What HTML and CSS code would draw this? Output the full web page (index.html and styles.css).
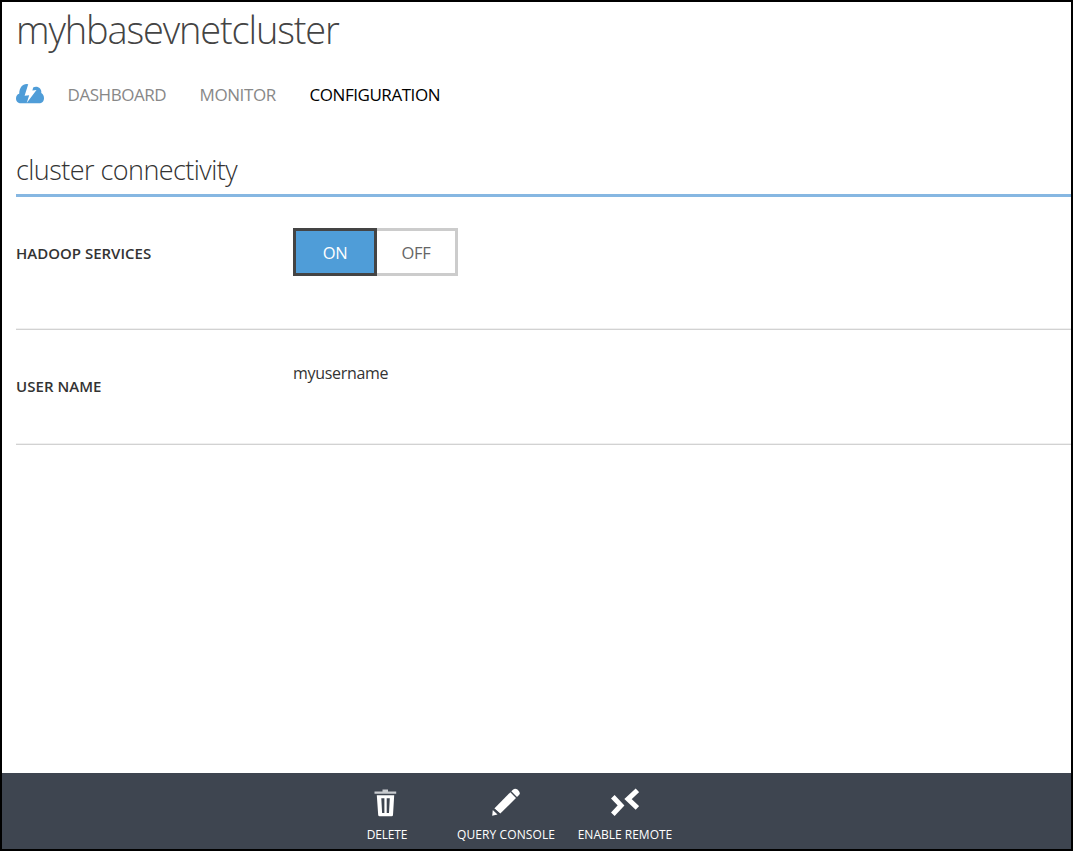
FILE: index.html
```html
<!DOCTYPE html>
<html lang="en">
<head>
<meta charset="utf-8">
<title>myhbasevnetcluster</title>
<link rel="stylesheet" href="styles.css">
</head>
<body>
<div class="portal">
  <main class="content">
    <h1 class="title">myhbasevnetcluster</h1>
    <nav class="tabs">
      <svg class="cloud" viewBox="0 0 28 20" aria-hidden="true">
        <path fill="#4f9dd8" d="M5 19.300C2 19.300 0 17.200 0 14.500C0 12 1.200 10.200 3.200 9.700C3.400 3.500 6.500 0 10.500 0L14 .4L17 3.500C21.500 1.500 26 4.500 25.300 9C27.200 10 28 12 28 14.200C28 17.300 26 19.300 23 19.300Z"/>
        <path fill="#fff" d="M12.300 0H18L16.400 6.500L20.500 6L10.700 19L13.200 11.300L8.600 11.800Z"/>
      </svg>
      <a class="tab tab-dashboard">DASHBOARD</a>
      <a class="tab tab-monitor">MONITOR</a>
      <a class="tab tab-active">CONFIGURATION</a>
    </nav>
    <h2 class="section-title">cluster connectivity</h2>
    <section class="row services">
      <span class="label label-services">HADOOP SERVICES</span>
      <div class="toggle">
        <button class="on">ON</button>
        <button class="off">OFF</button>
      </div>
    </section>
    <section class="row user">
      <span class="label label-user">USER NAME</span>
      <span class="value">myusername</span>
    </section>
  </main>
  <footer class="commands">
    <div class="command delete">
      <svg viewBox="0 0 28 30" aria-hidden="true">
        <path fill="#c9ccd0" d="M9.500 1.500h5.500v2h8.200v2.300H1.500V3.500h8z"/>
        <path fill="#fff" fill-rule="evenodd" d="M3.800 7.200H21.200L20 27Q19.900 28.300 18.600 28.300H6.600Q5.300 28.300 5.200 27ZM8.300 10.300L9.100 25H11.400V10.300ZM13.700 10.300V25H16L16.800 10.300Z"/>
      </svg>
      <span>DELETE</span>
    </div>
    <div class="command query">
      <svg viewBox="0 0 28 30" aria-hidden="true">
        <path fill="#fff" d="M2.300 20.500L18.300 4.300L24 10L8.300 25.500Z"/>
        <path fill="#fff" d="M19.300 3.300L21.200 1.400Q23.200-.2 25.500 1.600L27 3.200Q28.500 5.200 27 7L25 9Z"/>
        <path fill="#fff" d="M.8 22L5.500 26.500L.2 27.800Z"/>
        <path stroke="#3e4550" stroke-width="1" d="M2 20.500L8 26.500"/>
      </svg>
      <span>QUERY CONSOLE</span>
    </div>
    <div class="command remote">
      <svg viewBox="0 0 28 30" aria-hidden="true">
        <path fill="none" stroke="#fff" stroke-width="5" d="M1.800 8.700L10 17.400L1.800 26.200M26.400 2.200L17 11.100L26.400 20"/>
      </svg>
      <span>ENABLE REMOTE</span>
    </div>
  </footer>
</div>
</body>
</html>
```
FILE: styles.css
```css
* { box-sizing: border-box; }
body { margin: 0; background: #fff; font-family: "Open Sans", "Noto Sans", sans-serif; color: #333; }
.portal { width: 1073px; height: 851px; border: 2px solid #000; display: flex; flex-direction: column; overflow: hidden; }
.content { flex: 1; padding-left: 14px; }
.title { margin: 0; height: 56px; line-height: 54px; font-size: 38px; font-weight: 300; letter-spacing: -1.15px; color: #444; }
.tabs { display: flex; align-items: center; height: 70px; padding-top: 2px; }
.cloud { width: 28px; height: 20px; margin-right: 23.5px; }
.tab { font-size: 17px; font-weight: 400; line-height: 24px; padding-top: 2px; color: #888; white-space: nowrap; }
.tab-dashboard { width: 132px; letter-spacing: -0.45px; }
.tab-monitor { width: 110px; letter-spacing: -0.4px; }
.tab-active { color: #000; letter-spacing: -0.45px; }
.section-title { margin: 0; height: 69px; padding-top: 24px; line-height: 36px; font-size: 27px; font-weight: 300; letter-spacing: -0.55px; color: #333; border-bottom: 3px solid #86b7e2; }
.row { display: grid; grid-template-columns: 277px 1fr; align-items: start; border-bottom: 1px solid #d2d2d2; box-shadow: inset 0 -1px #f0f0f0; }
.services { height: 133px; padding-top: 31px; }
.user { height: 115px; padding-top: 31px; }
.label { font-size: 15px; font-weight: 600; line-height: 20px; white-space: nowrap; }
.label-services { margin-top: 15px; letter-spacing: 0; }
.label-user { margin-top: 15px; letter-spacing: 0.05px; }
.value { font-size: 16px; line-height: 24px; letter-spacing: -0.3px; }
.toggle { display: flex; height: 48px; }
.toggle button { padding: 0; margin: 0; background: #fff; font: 400 16.5px "Open Sans", sans-serif; border: 3px solid #ccc; color: #666; letter-spacing: -0.3px; }
.toggle .on { width: 84px; background: #4f9dd8; border-color: #444; color: #fff; }
.toggle .off { width: 81px; border-left: 0; }
.commands { height: 76px; background: #3e4550; display: flex; padding: 15px 0 0 335px; color: #fff; }
.command { display: flex; flex-direction: column; align-items: center; }
.command svg { width: 28px; height: 30px; }
.command span { font-size: 12px; line-height: 16px; margin-top: 9px; white-space: nowrap; letter-spacing: 0; }
.delete { width: 100px; }
.delete span { letter-spacing: -0.15px; }
.query { width: 138px; }
.query span { letter-spacing: 0.1px; }
.remote { width: 100px; }
```
